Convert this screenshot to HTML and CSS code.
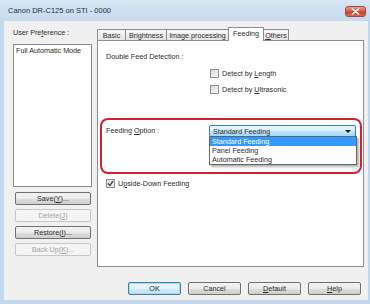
FILE: index.html
```html
<!DOCTYPE html>
<html lang="en">
<head>
    <meta charset="UTF-8">
    <meta name="viewport" content="width=device-width, initial-scale=1.0">
    <title>Canon DR-C125 on STI - 0000</title>
    <link rel="stylesheet" href="styles.css">
</head>
<body>
    <div class="window">
        <div class="titlebar">
            <span class="title">Canon DR-C125 on STI - 0000</span>
            <div class="close">
                <svg width="9" height="7" viewBox="0 0 9 7">
                    <path d="M1.5 1 L7.5 6 M7.5 1 L1.5 6" stroke="#fff" stroke-width="1.6" stroke-linecap="round"/>
                </svg>
            </div>
        </div>

        <div class="client">
            <div class="top">
                <div class="prefs">
                    <div class="label">User Pre<u>f</u>erence :</div>
                    <div class="listbox">
                        <div class="item">Full Automatic Mode</div>
                    </div>
                    <div class="btn first"><span>Save(<u>Y</u>)...</span></div>
                    <div class="btn disabled"><span>Delete(<u>J</u>)</span></div>
                    <div class="btn"><span>Restore(<u>I</u>)...</span></div>
                    <div class="btn disabled"><span>Back Up(<u>K</u>)...</span></div>
                </div>

                <div class="tabs">
                    <div class="tabrow">
                        <div class="tab basic">Basic</div>
                        <div class="tab bright">Brightness</div>
                        <div class="tab image">Image processing</div>
                        <div class="tab feeding selected">Feeding</div>
                        <div class="tab others"><span><u>O</u>thers</span></div>
                    </div>
                    <div class="panel">
                        <div class="section-title">Double Feed Detection :</div>
                        <div class="checks">
                            <div class="check"><span class="box"></span><span>Detect by <u>L</u>ength</span></div>
                            <div class="check"><span class="box"></span><span>Detect by <u>U</u>ltrasonic</span></div>
                        </div>

                        <div class="highlight">
                            <div class="option-label">Feeding <u>O</u>ption :</div>
                            <div class="combo">
                                <span>Standard Feeding</span>
                                <span class="arrow"></span>
                                <div class="droplist">
                                    <div class="opt active">Standard Feeding</div>
                                    <div class="opt">Panel Feeding</div>
                                    <div class="opt">Automatic Feeding</div>
                                </div>
                            </div>
                        </div>

                        <div class="check upside">
                            <span class="box checked">
                                <svg width="7" height="7" viewBox="0 0 7 7">
                                    <path d="M1 3.5 L3 5.5 L6 1" fill="none" stroke="#3b4a5c" stroke-width="1.4"/>
                                </svg>
                            </span>
                            <span>U<u>p</u>side-Down Feeding</span>
                        </div>
                    </div>
                </div>
            </div>

            <div class="actions">
                <div class="btn wide default">OK</div>
                <div class="btn wide">Cancel</div>
                <div class="btn wide"><span><u>D</u>efault</span></div>
                <div class="btn wide"><span><u>H</u>elp</span></div>
            </div>
        </div>
    </div>
</body>
</html>
```

FILE: styles.css
```css
body {
    margin: 0;
    font-family: 'Liberation Sans', Arial, sans-serif;
    font-size: 7.2px;
    color: #2a2a2a;
}

u {
    text-decoration-thickness: 1px;
    text-underline-offset: 1px;
}

.window {
    width: 370px;
    height: 304px;
    display: flex;
    flex-direction: column;
    background: #c2d6ec;
    overflow: hidden;
}

.titlebar {
    height: 21px;
    display: flex;
    justify-content: space-between;
    align-items: center;
    padding: 0 4px 0 8px;
    background: linear-gradient(#d9e6f4, #c6d9ee);
}

.title {
    font-size: 7.5px;
    color: #1e2b3b;
}

.close {
    width: 21px;
    height: 11px;
    box-sizing: border-box;
    margin-top: 2px;
    border: 1px solid #9c4a3e;
    border-radius: 3px;
    background: linear-gradient(#e8a08e, #d4543f 50%, #c53b27 51%, #d86b4f);
    display: flex;
    align-items: center;
    justify-content: center;
}

.client {
    flex: 1;
    margin: 0 2px 4px 4px;
    background: #f0f0f0;
    display: flex;
    flex-direction: column;
}

.top {
    height: 240px;
    display: flex;
    gap: 5px;
    padding: 6px 4px 0 9px;
}

.prefs {
    width: 79px;
    display: flex;
    flex-direction: column;
    padding-top: 1px;
}

.label {
    line-height: 10px;
}

.listbox {
    margin-top: 6px;
    height: 143px;
    box-sizing: border-box;
    border: 1px solid #828790;
    background: #fff;
}

.listbox .item {
    padding: 1px 2px;
    line-height: 10px;
}

.btn {
    height: 13px;
    box-sizing: border-box;
    border: 1px solid #707070;
    border-radius: 2px;
    background: linear-gradient(#f2f2f2, #ebebeb 50%, #dddddd 51%, #cfcfcf);
    display: flex;
    align-items: center;
    justify-content: center;
    color: #2a2a2a;
}

.prefs .btn {
    width: 76px;
    margin: 4px 0 0 2px;
}

.prefs .btn.first {
    margin-top: 5px;
}

.btn.disabled {
    border-color: #c6c6c6;
    background: #f4f4f4;
    color: #a3a3a3;
}

.tabs {
    flex: 1;
    display: flex;
    flex-direction: column;
}

.tabrow {
    height: 13px;
    display: flex;
    align-items: flex-end;
}

.tab {
    height: 11px;
    box-sizing: border-box;
    border: 1px solid #898c95;
    border-bottom: none;
    margin-right: -1px;
    background: linear-gradient(#f7f7f7, #e4e4e4);
    display: flex;
    align-items: center;
    justify-content: center;
}

.tab.basic { width: 29px; }
.tab.bright { width: 42px; }
.tab.image { width: 63px; }
.tab.feeding { width: 36px; }
.tab.others { width: 26px; }

.tab.selected {
    height: 14px;
    margin-bottom: -1px;
    background: #fff;
    position: relative;
    z-index: 1;
    padding-bottom: 2px;
}

.panel {
    flex: 1;
    border: 1px solid #898c95;
    background: #fff;
    padding-top: 11px;
}

.section-title {
    padding-left: 8px;
    line-height: 10px;
}

.checks {
    margin: 6px 0 0 112px;
    display: flex;
    flex-direction: column;
    gap: 6px;
}

.check {
    height: 10px;
    display: flex;
    align-items: center;
    gap: 3px;
}

.box {
    width: 9px;
    height: 9px;
    box-sizing: border-box;
    border: 1px solid #8e8f8f;
    background: linear-gradient(135deg, #d8d8d8, #f9f9f9);
    display: flex;
    align-items: center;
    justify-content: center;
}

.highlight {
    margin: 24px 0 0 2px;
    width: 262px;
    height: 56px;
    box-sizing: border-box;
    border: 2px solid #d3222c;
    border-radius: 8px;
    padding: 5px 0 0 4px;
    display: flex;
    align-items: flex-start;
}

.option-label {
    width: 103px;
    line-height: 12px;
}

.combo {
    width: 147px;
    height: 12px;
    box-sizing: border-box;
    border: 1px solid #3c7fb1;
    border-radius: 2px;
    background: linear-gradient(#eaf6fd, #d9f0fc 50%, #bee6fd 51%, #a7d9f5);
    display: flex;
    align-items: center;
    justify-content: space-between;
    padding: 0 4px 0 3px;
    position: relative;
}

.arrow {
    width: 0;
    height: 0;
    border-left: 3px solid transparent;
    border-right: 3px solid transparent;
    border-top: 3px solid #1b1b1b;
}

.droplist {
    position: absolute;
    top: 100%;
    left: -1px;
    width: 148px;
    box-sizing: border-box;
    border: 1px solid #646464;
    background: #fff;
    box-shadow: 2px 2px 2px rgba(0, 0, 0, 0.3);
}

.opt {
    height: 9px;
    line-height: 9px;
    padding-left: 2px;
}

.opt.active {
    background: #3399ff;
    color: #fff;
}

.upside {
    margin: 4px 0 0 8px;
}

.actions {
    display: flex;
    justify-content: flex-end;
    gap: 7px;
    padding-right: 7px;
    margin-top: 15px;
}

.btn.wide {
    width: 53px;
}

.btn.default {
    border-color: #3c7fb1;
    box-shadow: inset 0 0 0 1px #a6dcf2;
    background: linear-gradient(#eef7fc, #e3f1fa 50%, #d2e9f7 51%, #c4e1f3);
}
```
